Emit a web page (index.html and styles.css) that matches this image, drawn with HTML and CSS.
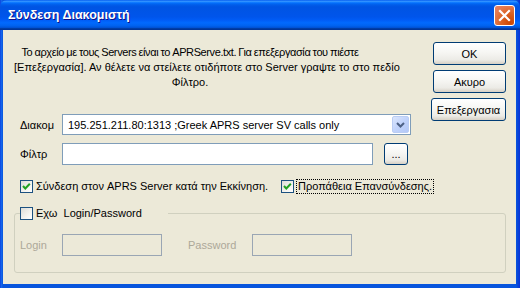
FILE: index.html
```html
<!DOCTYPE html>
<html lang="el">
<head>
    <meta charset="UTF-8">
    <title>Σύνδεση Διακομιστή</title>
    <link rel="stylesheet" href="styles.css">
</head>
<body>

<div class="window">
    <div class="titlebar">
        <span class="title">Σύνδεση Διακομιστή</span>
        <button class="close" aria-label="Close">
            <svg width="19" height="19" viewBox="0 0 19 19">
                <path d="M5 5 L14 14 M14 5 L5 14" stroke="#fff" stroke-width="2.2" stroke-linecap="square" fill="none"/>
            </svg>
        </button>
    </div>

    <div class="client">
        <div class="top">
            <div class="main">
                <p class="intro"><span class="intro-first">Το αρχείο με τους Servers είναι το APRServe.txt. Για επεξεργασία του πιέστε</span><br>[Επεξεργασία]. Αν θέλετε να στείλετε οτιδήποτε στο Server γραψτε το στο πεδίο<br>Φίλτρο.</p>

                <div class="row row-server">
                    <label class="field-label">Διακομ</label>
                    <div class="combo">
                        <span class="combo-text">195.251.211.80:1313 ;Greek APRS server SV calls only</span>
                        <span class="combo-btn">
                            <svg width="15" height="15" viewBox="0 0 15 15">
                                <path d="M4 6 L7.5 9.5 L11 6" stroke="#4d6185" stroke-width="2" fill="none"/>
                            </svg>
                        </span>
                    </div>
                </div>

                <div class="row row-filter">
                    <label class="field-label">Φίλτρ</label>
                    <div class="edit edit-filter"></div>
                    <button class="btn btn-small">...</button>
                </div>
            </div>

            <div class="buttons">
                <button class="btn">OK</button>
                <button class="btn">Ακυρο</button>
                <button class="btn btn-wide">Επεξεργασια</button>
            </div>
        </div>

        <div class="checks">
            <div class="check">
                <span class="box"><svg width="11" height="11" viewBox="0 0 11 11"><path d="M2 5 L4.3 7.5 L8.8 2.8" stroke="#21a121" stroke-width="2" fill="none"/></svg></span>
                <span>Σύνδεση στον APRS Server κατά την Εκκίνηση.</span>
            </div>
            <div class="check">
                <span class="box"><svg width="11" height="11" viewBox="0 0 11 11"><path d="M2 5 L4.3 7.5 L8.8 2.8" stroke="#21a121" stroke-width="2" fill="none"/></svg></span>
                <span class="focused">Προπάθεια Επανσύνδεσης.</span>
            </div>
        </div>

        <fieldset class="group">
            <legend class="check group-title">
                <span class="box"></span>
                <span>Εχω&nbsp; Login/Password</span>
            </legend>
            <div class="row row-login">
                <label class="field-label disabled">Login</label>
                <div class="edit edit-disabled"></div>
                <label class="field-label disabled pass-label">Password</label>
                <div class="edit edit-disabled"></div>
            </div>
        </fieldset>
    </div>
</div>

</body>
</html>
```

FILE: styles.css
```css
body {
    margin: 0;
    background: #ffffff;
    font-family: 'Liberation Sans', Arial, sans-serif;
    font-size: 11px;
    color: #000;
}

.window {
    width: 520px;
    height: 288px;
    display: flex;
    flex-direction: column;
    background: linear-gradient(to right, #0831d9 0, #166aee 1px, #0855dd 3px, #0855dd 516px, #0843d8 518px, #0831d9 100%);
}

.titlebar {
    height: 30px;
    flex-shrink: 0;
    display: flex;
    align-items: center;
    padding: 0 5px 0 8px;
    border-radius: 7px 7px 0 0;
    background: linear-gradient(to bottom, #0058ee 0%, #3593ff 4%, #288eff 6%, #127dff 8%, #036ffc 10%, #0262ee 14%, #0057e5 20%, #0054e3 24%, #0055eb 56%, #005bf5 66%, #026afe 76%, #0062ef 86%, #0052d6 92%, #0040ab 94%, #003092 100%);
}

.title {
    color: #fff;
    font-weight: bold;
    font-size: 12.5px;
    text-shadow: 1px 1px #0f1089;
}

.close {
    margin-left: auto;
    width: 21px;
    height: 21px;
    padding: 0;
    border: 1px solid #fff;
    border-radius: 3px;
    background: radial-gradient(circle at 80% 85%, #cc4600 0%, #dc6527 45%, #e5774a 70%, #e8826a 100%);
    display: flex;
    align-items: center;
    justify-content: center;
}

.client {
    flex: 1;
    margin: 0 4px 4px 3px;
    padding: 12px 10px 0 11px;
    background: #ece9d8;
    display: flex;
    flex-direction: column;
}

.top {
    display: flex;
    justify-content: space-between;
}

.main {
    width: 398px;
}

.intro {
    width: 352px;
    margin: 3px 0 0;
    text-align: center;
    line-height: 15px;
    white-space: nowrap;
}

.intro-first {
    letter-spacing: -0.4px;
    word-spacing: -0.4px;
}

.row {
    display: flex;
    align-items: center;
    padding-left: 6px;
}

.row-server {
    margin-top: 24px;
}

.row-filter {
    margin-top: 8px;
}

.field-label {
    width: 42px;
    flex-shrink: 0;
}

.combo {
    width: 349px;
    height: 21px;
    box-sizing: border-box;
    border: 1px solid #7f9db9;
    background: #fff;
    display: flex;
    align-items: center;
    padding-left: 5px;
}

.combo-btn {
    margin-left: auto;
    margin-right: 1px;
    width: 17px;
    height: 17px;
    box-sizing: border-box;
    border: 1px solid #bacdf4;
    border-radius: 2px;
    background: linear-gradient(135deg, #dbe6fd 0%, #c1d3fb 50%, #b3c8f7 100%);
    display: flex;
    align-items: center;
    justify-content: center;
}

.edit {
    height: 22px;
    box-sizing: border-box;
    border: 1px solid #7f9db9;
    background: #fff;
}

.edit-filter {
    width: 311px;
}

.btn {
    height: 23px;
    padding: 0;
    font-family: inherit;
    font-size: 11px;
    color: #000;
    border: 1px solid #003c74;
    border-radius: 3px;
    background: linear-gradient(to bottom, #ffffff 0%, #f6f6f3 45%, #ecebe6 80%, #d6d0c5 100%);
}

.btn-small {
    width: 24px;
    height: 22px;
    margin-left: 11px;
}

.buttons {
    width: 75px;
    display: flex;
    flex-direction: column;
    align-items: flex-end;
    gap: 5px;
}

.buttons .btn {
    width: 73px;
}

.buttons .btn-wide {
    width: 75px;
}

.checks {
    display: grid;
    grid-template-columns: 261px auto;
    margin-top: 15px;
    padding-left: 6px;
}

.check {
    display: flex;
    align-items: center;
    gap: 3px;
    line-height: 13px;
}

.box {
    width: 13px;
    height: 13px;
    box-sizing: border-box;
    border: 1px solid #1c5180;
    background: linear-gradient(135deg, #dcdcd7 0%, #f3f3ef 60%, #ffffff 100%);
    display: flex;
    align-items: center;
    justify-content: center;
}

.focused {
    outline: 1px dotted #000;
    outline-offset: 0;
    padding: 0 1px;
}

.group {
    margin: 14px 0 0;
    padding: 0 5px 16px;
    border: 1px solid #d0d0bf;
    border-radius: 3px;
}

.group-title {
    padding: 0 26px 0 0;
    background: #ece9d8;
}

.row-login {
    margin-top: 14px;
    padding-left: 0;
}

.row-login .edit {
    width: 100px;
}

.disabled {
    color: #aca899;
}

.pass-label {
    width: 64px;
    margin-left: 26px;
}

.edit-disabled {
    border-color: #9aa6b4;
    background: #ece9d8;
}
```
